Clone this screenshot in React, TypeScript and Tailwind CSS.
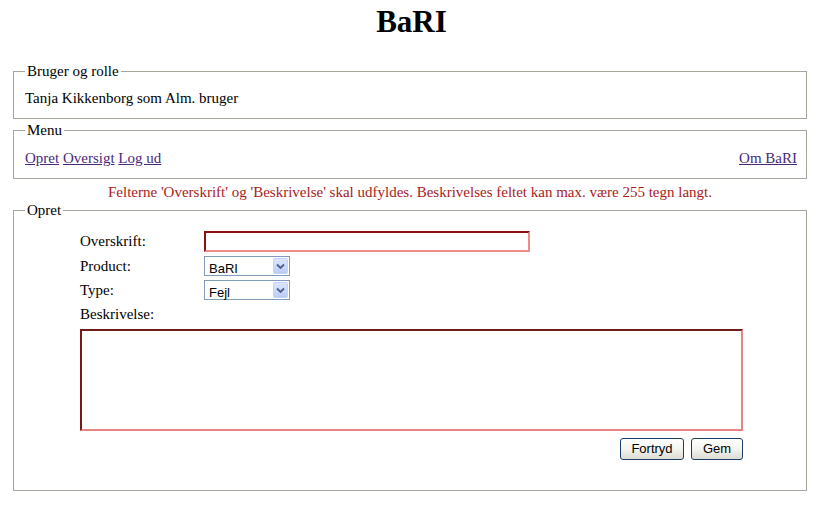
import type { ReactNode } from 'react';

const serif = { fontFamily: '"Liberation Serif", "Times New Roman", serif' };

function Box({ title, children, className }: { title: string; children: ReactNode; className?: string }) {
  return (
    <fieldset className={`border border-[#a6a69c] px-[11px] ${className ?? ''}`}>
      <legend className="px-[2px] leading-[17px]">{title}</legend>
      {children}
    </fieldset>
  );
}

function Chooser({ value }: { value: string }) {
  return (
    <div className="relative h-[20px] w-[86px] border border-[#7f9db9] bg-white">
      <select
        className="h-full w-full appearance-none bg-transparent pl-[4px] text-[13px] leading-[18px] text-black outline-none"
        style={{ fontFamily: '"Liberation Sans", Arial, sans-serif' }}
        defaultValue={value}
      >
        <option>{value}</option>
      </select>
      <div className="pointer-events-none absolute right-[1px] top-[1px] flex h-[16px] w-[15px] items-center justify-center rounded-[2px] border border-[#c3d3fd] bg-gradient-to-b from-[#dbe6ff] to-[#b9cdf8]">
        <svg width="9" height="7" viewBox="0 0 9 7">
          <path d="M1 1.5 L4.5 5 L8 1.5" fill="none" stroke="#4d6185" strokeWidth="1.8" />
        </svg>
      </div>
    </div>
  );
}

function XpButton({ label, width }: { label: string; width: string }) {
  return (
    <button
      type="button"
      className={`h-[22px] ${width} rounded-[3px] border border-[#1c3e64] bg-gradient-to-b from-white via-[#f4f4f0] to-[#dcdcd4] text-[13px] leading-[20px] text-black`}
      style={{ fontFamily: '"Liberation Sans", Arial, sans-serif' }}
    >
      {label}
    </button>
  );
}

export default function App() {
  return (
    <div className="min-h-[507px] bg-white pb-[16px] text-[15px] text-black" style={serif}>
      <h1 className="pt-[4px] text-center text-[31px] font-bold leading-[36px]">BaRI</h1>

      <div className="ml-[13px] mr-[16px]">
        <Box title="Bruger og rolle" className="mt-[23px] pb-[11px]">
          <div className="pt-[10px] leading-[17px]">Tanja Kikkenborg som Alm. bruger</div>
        </Box>

        <Box title="Menu" className="mt-[3px] pb-[11px] pr-[9px]">
          <div className="flex justify-between pt-[11px] leading-[17px]">
            <div className="text-[#4a2a7a]">
              <a href="#" className="underline">Opret</a> <a href="#" className="underline">Oversigt</a>{' '}
              <a href="#" className="underline">Log ud</a>
            </div>
            <a href="#" className="text-[#4a2a7a] underline">
              Om BaRI
            </a>
          </div>
        </Box>

        <p className="mt-[5px] text-center leading-[17px] text-[#a81c1c]">
          Felterne 'Overskrift' og 'Beskrivelse' skal udfyldes. Beskrivelses feltet kan max. være 255 tegn langt.
        </p>

        <Box title="Opret" className="mt-[1px] pb-[30px]">
          <div className="ml-[55px] w-[663px] pt-[12px]">
            <div className="flex h-[20px] items-center">
              <span className="w-[124px] leading-[17px]">Overskrift:</span>
              <input
                type="text"
                className="h-[21px] w-[326px] border-2 border-b-[#ee8c8c] border-l-[#8e0f0f] border-r-[#ee8c8c] border-t-[#8e0f0f] bg-white outline-none"
              />
            </div>
            <div className="mt-[5px] flex h-[20px] items-center">
              <span className="w-[124px] leading-[17px]">Product:</span>
              <Chooser value="BaRI" />
            </div>
            <div className="mt-[4px] flex h-[20px] items-center">
              <span className="w-[124px] leading-[17px]">Type:</span>
              <Chooser value="Fejl" />
            </div>
            <div className="mt-[4px] flex h-[20px] items-center leading-[17px]">Beskrivelse:</div>
            <textarea className="mt-[5px] block h-[102px] w-[663px] resize-none border-2 border-b-[#e98484] border-l-[#7a1818] border-r-[#e98484] border-t-[#6e1c1c] bg-white outline-none" />
            <div className="mt-[7px] flex justify-end gap-[7px]">
              <XpButton label="Fortryd" width="w-[64px]" />
              <XpButton label="Gem" width="w-[52px]" />
            </div>
          </div>
        </Box>
      </div>
    </div>
  );
}
